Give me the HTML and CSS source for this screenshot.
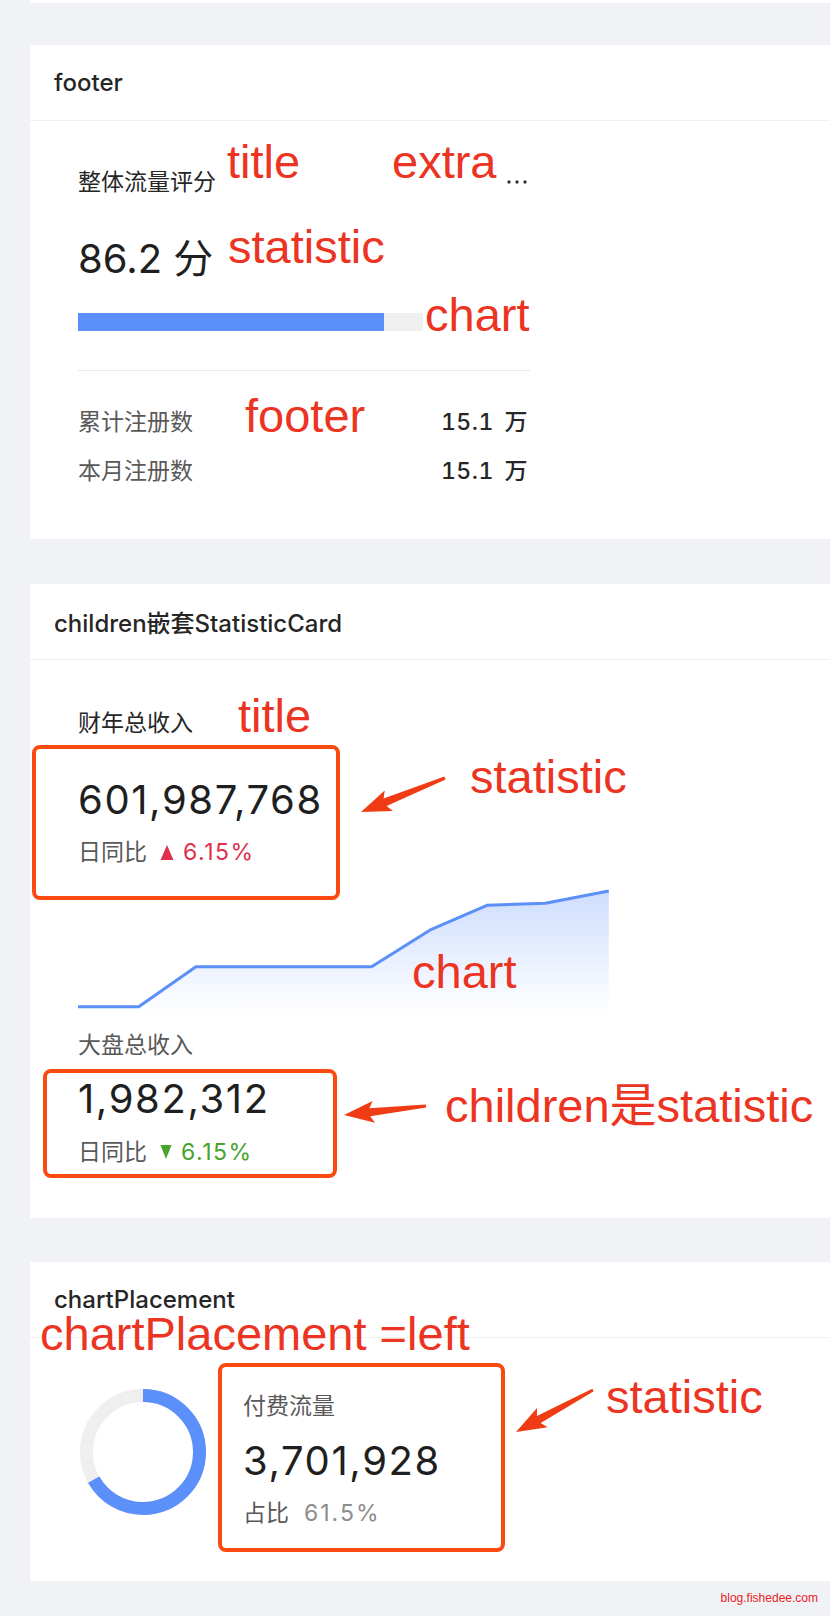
FILE: index.html
```html
<!DOCTYPE html>
<html lang="zh-CN">
<head>
<meta charset="utf-8">
<title>StatisticCard</title>
<link rel="stylesheet" href="styles.css">
</head>
<body>
<div class="page">
  <div class="stub"></div>

  <section class="card card-footer">
    <div class="card-head">footer</div>
    <div class="card-body body-footer">
      <div class="sc">
        <div class="sc-head">
          <span class="sc-title">整体流量评分</span>
          <svg class="extra" width="20" height="6" viewBox="0 0 20 6"><circle cx="2" cy="3" r="1.7"/><circle cx="10" cy="3" r="1.7"/><circle cx="18" cy="3" r="1.7"/></svg>
        </div>
        <div class="sc-value">86.2 分</div>
        <div class="bar"><div class="bar-fill" style="width:67.7%"></div></div>
        <div class="divider"></div>
        <div class="footer-rows">
          <div class="footer-row"><span class="label">累计注册数</span><span class="num">15.1 万</span></div>
          <div class="footer-row"><span class="label">本月注册数</span><span class="num">15.1 万</span></div>
        </div>
      </div>
    </div>
  </section>

  <section class="card card-nested">
    <div class="card-head">children嵌套StatisticCard</div>
    <div class="card-body body-nested">
      <div class="sc-title">财年总收入</div>
      <div class="sc-value big">601,987,768</div>
      <div class="sc-desc">日同比<span class="trend up"><svg width="14" height="15" viewBox="0 0 14 15"><polygon points="7,0 13.5,15 0.5,15"/></svg>6.15%</span></div>
      <svg class="area-chart" width="531" height="132" viewBox="0 0 531 132">
        <defs>
          <linearGradient id="areaFill" x1="0" y1="0" x2="0" y2="1">
            <stop offset="0" stop-color="#5b8ff9" stop-opacity="0.3"/>
            <stop offset="1" stop-color="#5b8ff9" stop-opacity="0"/>
          </linearGradient>
        </defs>
        <path d="M0,125.7 L60.7,125.7 L117.9,85.7 L293.6,85.7 L353.4,48.3 L409,24.3 L467.3,22.3 L530.8,10 L530.8,132 L0,132 Z" fill="url(#areaFill)"/>
        <path d="M0,125.7 L60.7,125.7 L117.9,85.7 L293.6,85.7 L353.4,48.3 L409,24.3 L467.3,22.3 L530.8,10" fill="none" stroke="#5b8ff9" stroke-width="3" stroke-linejoin="round"/>
      </svg>
      <div class="sc-title muted sub-title">大盘总收入</div>
      <div class="sc-value big sub-value">1,982,312</div>
      <div class="sc-desc sub-desc">日同比<span class="trend down"><svg width="12" height="14" viewBox="0 0 12 14"><polygon points="0.5,0 11.5,0 6,14"/></svg>6.15%</span></div>
    </div>
  </section>

  <section class="card card-placement">
    <div class="card-head">chartPlacement</div>
    <div class="card-body body-placement">
      <svg class="donut" width="126" height="126" viewBox="0 0 126 126">
        <circle cx="63" cy="63" r="56.5" fill="none" stroke="#efefef" stroke-width="13"/>
        <circle cx="63" cy="63" r="56.5" fill="none" stroke="#5b8ff9" stroke-width="13" stroke-dasharray="237 400" transform="rotate(-90 63 63)"/>
      </svg>
      <div class="stat">
        <div class="sc-title muted">付费流量</div>
        <div class="sc-value big">3,701,928</div>
        <div class="sc-desc">占比<span class="ratio">61.5%</span></div>
      </div>
    </div>
  </section>

  <div class="mark box1"></div>
  <div class="mark box2"></div>
  <div class="mark box3"></div>

  <svg class="arrows" width="830" height="1616" viewBox="0 0 830 1616">
    <polygon points="444.4,776.6 383.6,798.5 384.7,790.5 361,812 392.9,811 386.6,806 445.6,779.4"/>
    <polygon points="425.8,1104.5 369.4,1108.2 372.6,1100.9 344,1115 375,1122.7 370.2,1116.2 426.2,1107.5"/>
    <polygon points="592.3,1388.7 536.9,1416 537,1407.9 516,1432 547.6,1427.3 540.7,1423 593.7,1391.3"/>
  </svg>

  <span class="note n1">title</span>
  <span class="note n2">extra</span>
  <span class="note n3">statistic</span>
  <span class="note n4">chart</span>
  <span class="note n5">footer</span>
  <span class="note n6">title</span>
  <span class="note n7">statistic</span>
  <span class="note n8">chart</span>
  <span class="note n9">children是statistic</span>
  <span class="note n10">chartPlacement =left</span>
  <span class="note n11">statistic</span>

  <span class="watermark">blog.fishedee.com</span>
</div>
</body>
</html>
```

FILE: styles.css
```css
* { box-sizing: border-box; margin: 0; padding: 0; }
html, body { background: #f0f2f5; }
body {
  margin: 0;
  font-family: "Inter", "Noto Sans CJK SC", sans-serif;
  color: #262626;
}
.page {
  position: relative;
  width: 830px;
  height: 1616px;
  padding-left: 30px;
  overflow: hidden;
  background: #f0f2f5;
}
.stub { height: 3px; background: #fff; }

.card { background: #fff; width: 800px; }
.card-footer { margin-top: 42px; }
.card-nested { margin-top: 45px; }
.card-placement { margin-top: 44px; }

.card-head {
  height: 76px;
  border-bottom: 1px solid #f0f0f0;
  padding-left: 24px;
  display: flex;
  align-items: center;
  font-size: 24px;
  font-weight: 500;
  color: #262626;
}

/* statistic pieces */
.sc-title { font-size: 23px; line-height: 34px; color: #262626; }
.sc-title.muted { color: #595959; }
.sc-value { font-size: 40px; line-height: 48px; margin-top: 36px; color: #1f1f1f; }
.sc-value.big { letter-spacing: 1.6px; }
.sc-desc {
  margin-top: 11px;
  font-size: 23px;
  line-height: 34px;
  display: flex;
  align-items: center;
  color: #595959;
}
.trend { display: inline-flex; align-items: center; margin-left: 13px; letter-spacing: 1.5px; }
.trend svg { margin-right: 9px; }
.up { color: #e0304e; }
.up svg { fill: #e0304e; }
.down { color: #48a32a; }
.down svg { fill: #48a32a; }

/* card 1 */
.body-footer { padding: 44px 0 43px 48px; }
.sc { width: 452px; }
.sc-head { height: 34px; display: flex; justify-content: space-between; align-items: center; }
.extra { fill: #333; margin-right: 3px; }
.bar { margin-top: 30px; height: 18px; background: #f0f0f0; }
.bar-fill { height: 100%; background: #5b8ff9; }
.divider { margin-top: 39px; height: 1px; background: #e8e8e8; }
.footer-rows { margin-top: 27px; }
.footer-row { display: flex; justify-content: space-between; font-size: 23px; line-height: 49px; padding-right: 2px; }
.footer-row .label { color: #595959; }
.footer-row .num { color: #262626; font-weight: 500; font-variant-numeric: tabular-nums; word-spacing: 4px; letter-spacing: 0.5px; }

/* card 2 */
.body-nested { padding: 46px 0 49px 48px; }
.area-chart { display: block; margin-top: 12px; }
.sub-title { margin-top: 15px; }
.sub-value { margin-top: 13px; }
.sub-desc { margin-top: 12px; }

/* card 3 */
.body-placement { padding: 51px 0 51px 50px; display: flex; align-items: flex-start; gap: 37px; }
.donut { flex: none; display: block; }
.stat .sc-value { margin-top: 14px; }
.stat .sc-desc { margin-top: 11px; }
.ratio { margin-left: 15px; color: #8c8c8c; letter-spacing: 2px; }

/* annotations overlay */
.mark { position: absolute; border: 4px solid #fb4a10; border-radius: 8px; }
.box1 { left: 32px; top: 745px; width: 308px; height: 155px; }
.box2 { left: 43px; top: 1069px; width: 294px; height: 109px; }
.box3 { left: 218px; top: 1363px; width: 287px; height: 189px; }

.arrows { position: absolute; left: 0; top: 0; fill: #f03c14; pointer-events: none; }

.note {
  position: absolute;
  font-family: "Liberation Sans", "Noto Sans CJK SC", sans-serif;
  font-size: 47px;
  line-height: 47px;
  color: #ec3422;
  white-space: nowrap;
}
.n1 { left: 227px; top: 138px; }
.n2 { left: 392px; top: 138px; }
.n3 { left: 228px; top: 223px; }
.n4 { left: 423px; top: 291px; background: #fff; padding: 0 4px 0 2px; }
.n5 { left: 245px; top: 392px; }
.n6 { left: 238px; top: 692px; }
.n7 { left: 470px; top: 753px; }
.n8 { left: 412px; top: 948px; }
.n9 { left: 445px; top: 1082px; }
.n10 { left: 40px; top: 1310px; }
.n11 { left: 606px; top: 1373px; }

.watermark {
  position: absolute;
  right: 12px;
  top: 1591px;
  font-family: "Liberation Sans", sans-serif;
  font-size: 12px;
  line-height: 14px;
  color: #e8211d;
}
```
